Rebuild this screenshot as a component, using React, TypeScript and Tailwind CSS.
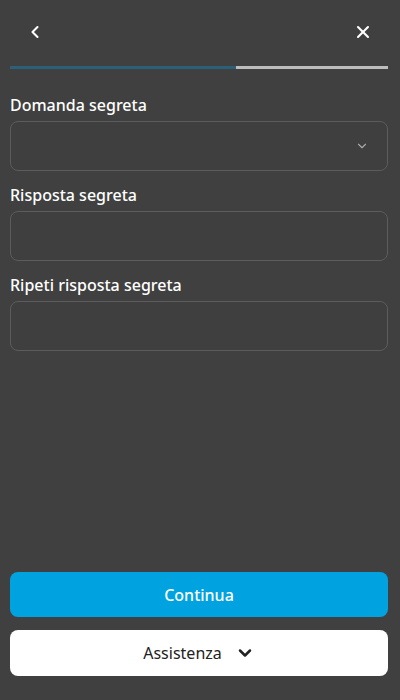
import { ChevronDown, ChevronLeft, X } from "lucide-react";

const font = { fontFamily: '"Noto Sans", "Open Sans", sans-serif' };

function Field({ label, select }: { label: string; select?: boolean }) {
  return (
    <div className="flex flex-col">
      <label className="text-[16px] font-medium leading-[20px] text-white">
        {label}
      </label>
      <div className="mt-[6px] flex h-[50px] items-center justify-end rounded-[8px] border border-[#5c5c5c] bg-[#3f3f3f] px-[18px]">
        {select && (
          <ChevronDown size={14} strokeWidth={2} className="text-[#a8a8a8]" />
        )}
      </div>
    </div>
  );
}

export default function App() {
  return (
    <div
      className="flex h-[700px] w-[400px] flex-col bg-[#404040] pl-[10px] pr-[12px]"
      style={font}
    >
      <div className="flex h-[66px] items-center justify-between pl-[15px] pr-[15px] pb-[2px]">
        <ChevronLeft size={20} strokeWidth={2.5} className="text-white" />
        <X size={20} strokeWidth={2.5} className="text-white" />
      </div>
      <div className="flex h-[3px]">
        <div className="w-[226px] bg-[#2c6078]" />
        <div className="flex-1 bg-[#bdbdbd]" />
      </div>
      <div className="mt-[26px] flex flex-col gap-[14px]">
        <Field label="Domanda segreta" select />
        <Field label="Risposta segreta" />
        <Field label="Ripeti risposta segreta" />
      </div>
      <div className="flex-1" />
      <button className="h-[45px] rounded-[8px] bg-[#00a3e0] text-[16px] font-medium text-white">
        Continua
      </button>
      <button className="mt-[13px] mb-[24px] flex h-[46px] items-center justify-center gap-[13px] rounded-[8px] bg-white text-[16px] text-[#222]">
        Assistenza
        <ChevronDown size={20} strokeWidth={3} className="text-[#222]" />
      </button>
    </div>
  );
}
